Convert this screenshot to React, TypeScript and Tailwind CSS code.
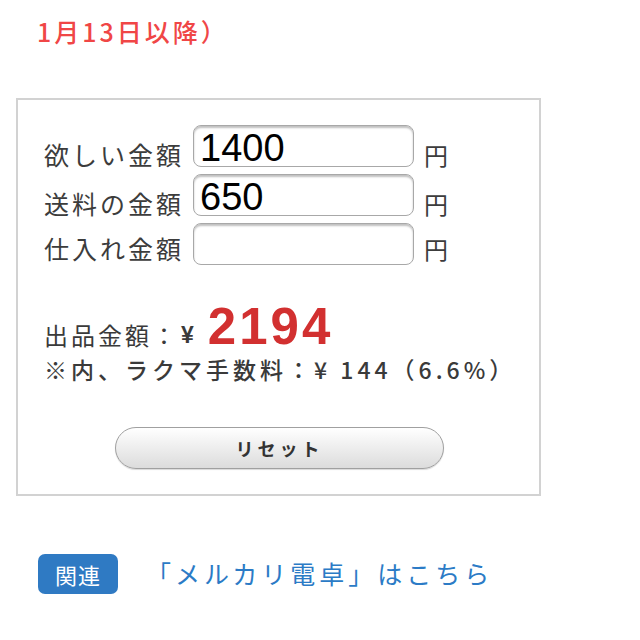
const jp = "font-['Noto_Sans_CJK_JP','Noto_Sans',sans-serif]"

function AmountRow({ label, value, last }: { label: string; value?: string; last?: boolean }) {
  return (
    <div className="flex items-end h-[42px]">
      <span
        className={`${jp} w-[149px] text-[25px] leading-none tracking-[3px] text-[#3c3c3c] ${last ? 'mb-[4px]' : 'mb-[0px]'}`}
      >
        {label}
      </span>
      <input
        type="text"
        defaultValue={value}
        readOnly
        className="w-[221px] h-[42px] rounded-[8px] border border-[#a8a8a8] bg-white px-[6px] pt-[4px] text-[38px] leading-none text-black shadow-[inset_0_2px_2px_rgba(0,0,0,0.25)] outline-none font-['Liberation_Sans',Arial,sans-serif]"
      />
      <span className={`${jp} ml-[10px] text-[24px] leading-none text-[#3c3c3c] ${last ? 'mb-[4px]' : 'mb-[0px]'}`}>円</span>
    </div>
  )
}

export default function App() {
  return (
    <div className={`${jp} w-[640px] h-[640px] bg-white overflow-hidden`}>
      <p className="pl-[37px] pt-[16px] text-[25px] leading-[30px] font-medium tracking-[3px] text-[#f04646]">
        1月13日以降）
      </p>

      <div className="ml-[16px] mt-[52px] w-[525px] h-[398px] border-2 border-[#d2d2d2] pl-[26px] pt-[25px]">
        <div className="flex flex-col gap-[7px]">
          <AmountRow label="欲しい金額" value="1400" />
          <AmountRow label="送料の金額" value="650" />
          <AmountRow label="仕入れ金額" last />
        </div>

        <div className="mt-[36px] flex items-end text-[#3a3a3a]">
          <span className="text-[24px] leading-none tracking-[3px] mb-[5px]">出品金額：</span>
          <span className="ml-[2px] text-[23px] leading-none font-bold mb-[5px] font-['Liberation_Sans',Arial,sans-serif]">¥</span>
          <span className="ml-[14px] text-[51px] leading-none font-bold tracking-[3px] text-[#d23030] font-['Liberation_Sans',Arial,sans-serif]">
            2194
          </span>
        </div>
        <p className="mt-[6px] text-[23px] leading-none font-medium tracking-[4px] text-[#3a3a3a]">
          ※内、ラクマ手数料：¥ 144（6.6%）
        </p>

        <button
          type="button"
          className="ml-[71px] mt-[46px] w-[329px] h-[42px] rounded-full border border-[#a0a0a0] bg-gradient-to-b from-white to-[#dcdcdc] text-[18px] font-bold tracking-[4px] text-[#333] shadow-[0_1px_1px_rgba(0,0,0,0.15)]"
        >
          リセット
        </button>
      </div>

      <div className="mt-[58px] ml-[38px] flex items-center">
        <span className="w-[80px] h-[40px] rounded-[7px] bg-[#2f7ac3] text-white text-[22px] leading-[40px] text-center tracking-[1px]">
          関連
        </span>
        <a href="#" className="ml-[28px] text-[25px] tracking-[4px] text-[#2b7bc6]">
          「メルカリ電卓」はこちら
        </a>
      </div>
    </div>
  )
}
